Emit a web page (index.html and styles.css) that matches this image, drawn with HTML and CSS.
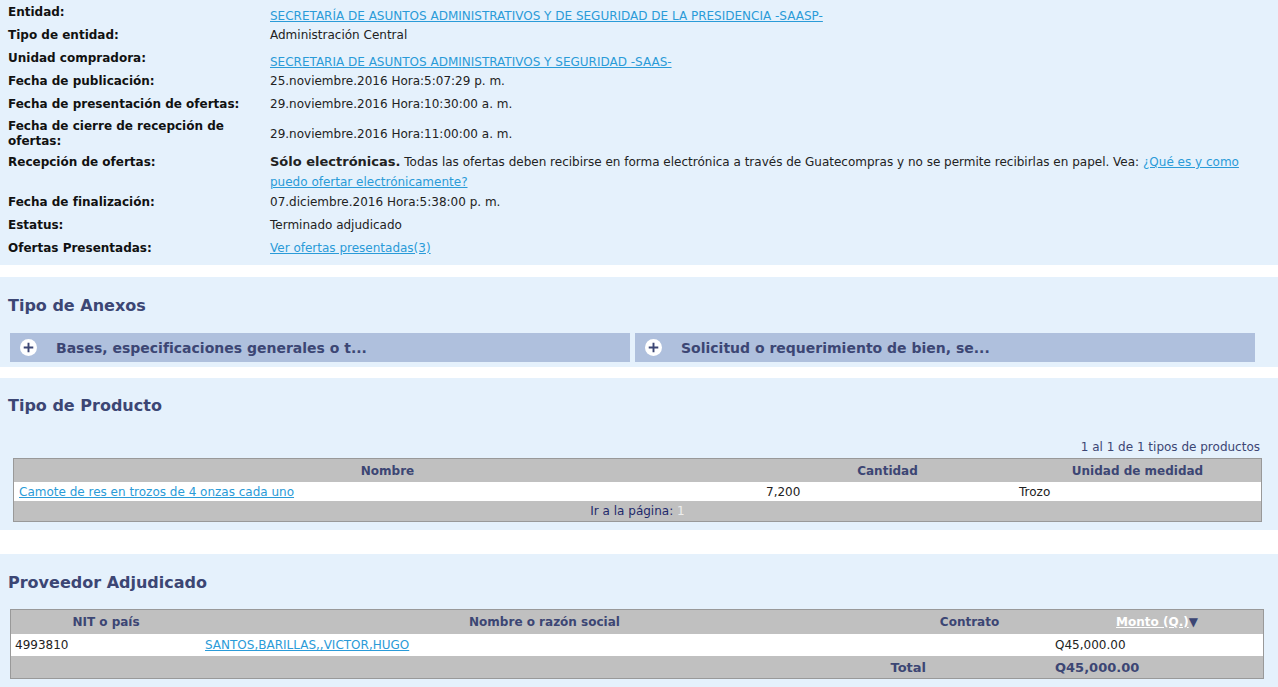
FILE: index.html
```html
<!DOCTYPE html>
<html lang="es">
<head>
<meta charset="UTF-8">
<title>Detalle de concurso</title>
<link rel="stylesheet" href="styles.css">
</head>
<body>

<div class="panel info">
  <div class="row">
    <div class="label">Entidad:</div>
    <div class="value link-value"><a href="#">SECRETARÍA DE ASUNTOS ADMINISTRATIVOS Y DE SEGURIDAD DE LA PRESIDENCIA -SAASP-</a></div>
  </div>
  <div class="row">
    <div class="label">Tipo de entidad:</div>
    <div class="value">Administración Central</div>
  </div>
  <div class="row">
    <div class="label">Unidad compradora:</div>
    <div class="value link-value"><a href="#">SECRETARIA DE ASUNTOS ADMINISTRATIVOS Y SEGURIDAD -SAAS-</a></div>
  </div>
  <div class="row">
    <div class="label">Fecha de publicación:</div>
    <div class="value">25.noviembre.2016 Hora:5:07:29 p. m.</div>
  </div>
  <div class="row">
    <div class="label">Fecha de presentación de ofertas:</div>
    <div class="value">29.noviembre.2016 Hora:10:30:00 a. m.</div>
  </div>
  <div class="row tight">
    <div class="label two-lines">Fecha de cierre de recepción de ofertas:</div>
    <div class="value middle">29.noviembre.2016 Hora:11:00:00 a. m.</div>
  </div>
  <div class="row tight">
    <div class="label">Recepción de ofertas:</div>
    <div class="value long"><b class="only">Sólo electrónicas.</b> Todas las ofertas deben recibirse en forma electrónica a través de Guatecompras y no se permite recibirlas en papel. Vea: <a href="#">¿Qué es y como puedo ofertar electrónicamente?</a></div>
  </div>
  <div class="row">
    <div class="label">Fecha de finalización:</div>
    <div class="value">07.diciembre.2016 Hora:5:38:00 p. m.</div>
  </div>
  <div class="row">
    <div class="label">Estatus:</div>
    <div class="value">Terminado adjudicado</div>
  </div>
  <div class="row">
    <div class="label">Ofertas Presentadas:</div>
    <div class="value"><a href="#">Ver ofertas presentadas(3)</a></div>
  </div>
</div>

<div class="panel annexes">
  <h2>Tipo de Anexos</h2>
  <div class="annex-list">
    <div class="annex">
      <span class="plus">
        <svg width="17" height="17" viewBox="0 0 16 16"><circle cx="8" cy="8" r="8" fill="#fff"/><path d="M8 3.5v9M3.5 8h9" stroke="#3c4674" stroke-width="1.8"/></svg>
      </span>
      Bases, especificaciones generales o t...
    </div>
    <div class="annex">
      <span class="plus">
        <svg width="17" height="17" viewBox="0 0 16 16"><circle cx="8" cy="8" r="8" fill="#fff"/><path d="M8 3.5v9M3.5 8h9" stroke="#3c4674" stroke-width="1.8"/></svg>
      </span>
      Solicitud o requerimiento de bien, se...
    </div>
  </div>
</div>

<div class="panel products">
  <h2>Tipo de Producto</h2>
  <div class="count">1 al 1 de 1 tipos de productos</div>
  <table class="grid product-grid">
    <tr>
      <th class="col-name">Nombre</th>
      <th class="col-qty">Cantidad</th>
      <th>Unidad de medidad</th>
    </tr>
    <tr class="data">
      <td><a href="#">Camote de res en trozos de 4 onzas cada uno</a></td>
      <td>7,200</td>
      <td>Trozo</td>
    </tr>
    <tr class="pager">
      <td colspan="3">Ir a la página: <span class="page">1</span></td>
    </tr>
  </table>
</div>

<div class="panel suppliers">
  <h2>Proveedor Adjudicado</h2>
  <table class="grid supplier-grid">
    <tr>
      <th class="col-nit">NIT o país</th>
      <th class="col-social">Nombre o razón social</th>
      <th class="col-contract">Contrato</th>
      <th><a href="#" class="sort">Monto (Q.)</a>&#9660;</th>
    </tr>
    <tr class="data">
      <td>4993810</td>
      <td><a href="#">SANTOS,BARILLAS,,VICTOR,HUGO</a></td>
      <td></td>
      <td>Q45,000.00</td>
    </tr>
    <tr class="total">
      <td colspan="3" class="total-label">Total</td>
      <td class="total-amount">Q45,000.00</td>
    </tr>
  </table>
</div>

</body>
</html>
```

FILE: styles.css
```css
body {
    margin: 0;
    font-family: "DejaVu Sans", Verdana, sans-serif;
    font-size: 12px;
    color: #222;
    background-color: #fff;
}

a {
    color: #2a9bd8;
}

.panel {
    background-color: #e5f1fc;
}

h2 {
    margin: 0;
    font-size: 16px;
    color: #3c4674;
}

/* datos generales */
.info {
    padding: 2px 8px 4px;
}

.row {
    display: flex;
    padding: 2px 0 5px;
}

.row.tight {
    padding-bottom: 3px;
}

.label {
    width: 262px;
    flex-shrink: 0;
    font-weight: bold;
    font-size: 12px;
    line-height: 16px;
    color: #111;
}

.label.two-lines {
    width: 230px;
    margin-right: 32px;
    line-height: 15px;
}

.value {
    line-height: 16px;
}

/* los enlaces van un poco más abajo que su etiqueta */
.link-value {
    padding-top: 4px;
    margin-bottom: -4px;
}

.middle {
    align-self: center;
}

.long {
    line-height: 20px;
    margin-top: -2px;
    margin-bottom: -3px;
}

.only {
    font-size: 13px;
}

/* anexos */
.annexes {
    margin-top: 12px;
    padding: 19px 8px 5px;
}

.annex-list {
    display: flex;
    gap: 5px;
    margin-top: 18px;
    padding-left: 2px;
    padding-right: 15px;
}

.annex {
    flex: 1;
    display: flex;
    align-items: center;
    height: 29px;
    padding-left: 10px;
    background-color: #afc0dd;
    color: #3c4674;
    font-weight: bold;
    font-size: 14px;
}

.plus {
    display: flex;
    margin-right: 19px;
}

/* productos */
.products {
    margin-top: 11px;
    padding: 18px 8px 8px;
}

.count {
    text-align: right;
    color: #3c4674;
    margin-top: 24px;
    padding-right: 10px;
    line-height: 16px;
}

.grid {
    width: 100%;
    border-collapse: collapse;
    border: 1px solid #999;
    font-size: 12px;
}

.grid th {
    background-color: #c0c0c0;
    color: #3c4674;
    font-weight: bold;
    text-align: center;
}

.grid .data td {
    background-color: #fff;
}

.product-grid {
    margin-left: 5px;
    width: 1249px;
    margin-top: 3px;
}

.product-grid th {
    height: 23px;
    padding: 0 5px;
}

.product-grid td {
    height: 19px;
    padding: 0 5px;
}

.col-name {
    width: 737px;
}

.col-qty {
    width: 243px;
}

.pager td {
    background-color: #c0c0c0;
    text-align: center;
    color: #1f2a6b;
    height: 20px;
}

.page {
    color: #eee;
}

/* proveedor */
.suppliers {
    margin-top: 24px;
    padding: 19px 8px 10px;
}

.supplier-grid {
    margin-left: 2px;
    width: 1254px;
    margin-top: 17px;
}

.supplier-grid th {
    height: 24px;
    padding: 0 4px;
}

.supplier-grid td {
    height: 22px;
    padding: 0 4px;
}

.col-nit {
    width: 182px;
}

.col-social {
    width: 679px;
}

.col-contract {
    width: 155px;
}

.sort {
    color: #fff;
}

.total td {
    background-color: #c0c0c0;
    color: #3c4674;
    font-weight: bold;
    font-size: 13px;
}

.total-label {
    text-align: right;
    padding-right: 125px !important;
}
```
